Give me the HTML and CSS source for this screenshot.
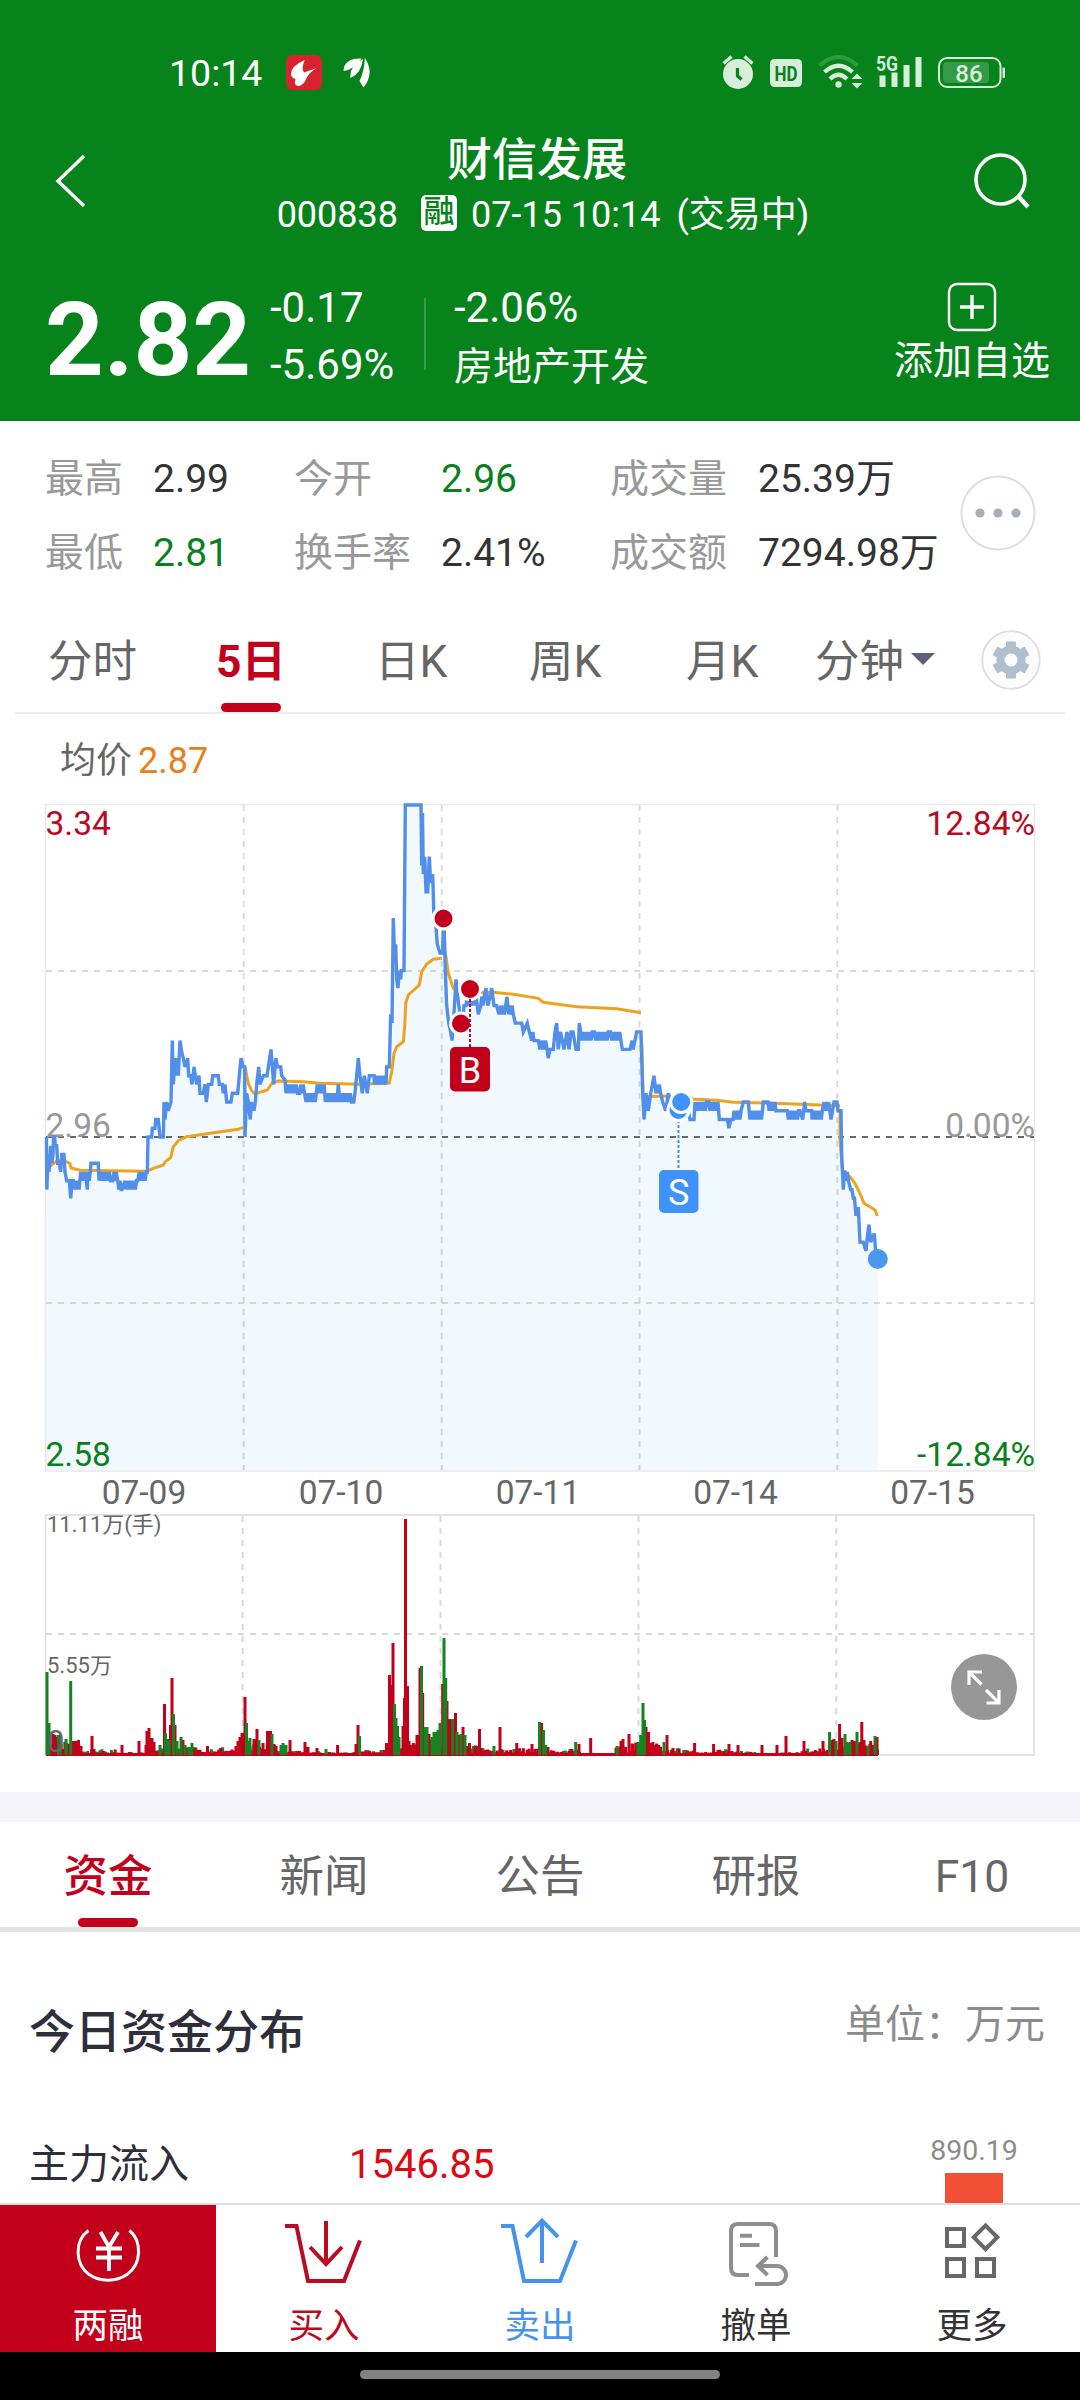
FILE: index.html
```html
<!DOCTYPE html>
<html lang="zh-CN">
<head>
  <meta charset="UTF-8" />
  <meta name="viewport" content="width=device-width, initial-scale=1.0"/>
  <title>财信发展 000838</title>
  <link rel="stylesheet" href="styles.css">
</head>
<body>

<header>
  <div class="status">
    <span class="time">10:14</span>
    <svg class="apps" width="90" height="50" viewBox="280 48 90 50">
      <rect x="286" y="55" width="36" height="35" rx="6" fill="#d8232f"/>
      <path d="M304.7 60 Q291 66 291 74 Q291 78 295.5 79 Q293 86 299 86 Q304 85 307 77 Q311 71 317 68 L304 72.5 Q301 69 304.7 60z" fill="#fff"/>
      <path d="M361.500 58.500 Q344 58 343.500 71 Q354 70 361.500 58.500z M363 59 Q349 66 350.500 78 Q361 74 363 59z M364.800 58 Q364.500 71 359.500 81 L363.500 87.500 Q375 73 364.800 58z" fill="#fff"/>
    </svg>
    <svg class="signals" width="310" height="50" viewBox="710 48 310 50">
      <g fill="#d8eedb">
        <circle cx="738" cy="74" r="15"/>
        <path d="M723.5 63.5 l8-7 M744.5 56.5 l8 7" stroke="#d8eedb" stroke-width="3.4"/>
        <path d="M737.5 68 v8 l4 3.5" fill="none" stroke="#07831b" stroke-width="3.2"/>
        <rect x="770" y="59" width="32" height="28" rx="4.5"/>
        <text class="hd" x="786" y="80.500" textLength="23" lengthAdjust="spacingAndGlyphs">HD</text>
        <path d="M819.5 65.5 Q838.5 48.5 857.5 65.5" fill="none" stroke="#d8eedb" stroke-opacity=".2" stroke-width="4"/>
        <path d="M824.5 72 Q838.5 59.5 852.5 72" fill="none" stroke="#d8eedb" stroke-width="4.2"/>
        <path d="M830 79 Q838.5 70.5 847 79" fill="none" stroke="#d8eedb" stroke-width="4.2"/>
        <circle cx="838.5" cy="84.5" r="3.2"/>
        <path d="M857 73.5 l5.5 5.5 h-11z M857 88.5 l5.5 -5.5 h-11z"/>
        <text class="net" x="876" y="70.5" textLength="22" lengthAdjust="spacingAndGlyphs">5G</text>
        <path d="M879.5 75.5h6v11.5h-6z M891.5 72.5h6v14.5h-6z M903.5 65h6v22h-6z M915.5 57h6v30h-6z"/>
        <rect x="939" y="58" width="61.5" height="29" rx="8" fill="none" stroke="#d8eedb" stroke-width="2"/>
        <rect x="943" y="62" width="46" height="21" rx="4" fill-opacity=".22"/>
        <rect x="1002.5" y="67.5" width="2.5" height="10.5" rx="1"/>
        <text class="bat" x="969" y="81.5">86</text>
      </g>
    </svg>
  </div>

  <div class="titlebar">
    <svg class="back" width="40" height="60" viewBox="0 0 40 60"><path d="M34 5 L8 30 L34 55" fill="none" stroke="#fff" stroke-width="3.4"/></svg>
    <div class="title">
      <h1>财信发展</h1>
      <p><span>000838</span><b>融</b><span>07-15 10:14</span><span class="state">(交易中)</span></p>
    </div>
    <svg class="search" width="60" height="60" viewBox="0 0 60 60"><circle cx="28.5" cy="28.5" r="24.5" fill="none" stroke="#fff" stroke-width="3.6"/><path d="M46 45 L56 56" stroke="#fff" stroke-width="4.5"/></svg>
  </div>

  <div class="quote">
    <div class="price">2.82</div>
    <div class="change"><span>-0.17</span><span>-5.69%</span></div>
    <div class="sector"><span>-2.06%</span><span class="name">房地产开发</span></div>
    <div class="add">
      <svg width="50" height="50" viewBox="0 0 50 50"><rect x="2" y="2" width="46" height="46" rx="8" fill="none" stroke="#fff" stroke-width="2.4"/><path d="M13 25H37M25 13V37" stroke="#fff" stroke-width="3.4"/></svg>
      <span>添加自选</span>
    </div>
  </div>
</header>

<section class="stats">
  <dl>
    <dt>最高</dt><dd>2.99</dd><dt>今开</dt><dd class="down">2.96</dd><dt>成交量</dt><dd>25.39万</dd>
    <dt>最低</dt><dd class="down">2.81</dd><dt>换手率</dt><dd>2.41%</dd><dt>成交额</dt><dd>7294.98万</dd>
  </dl>
  <svg class="dots" width="76" height="76" viewBox="0 0 76 76"><circle cx="38" cy="38" r="36.5" fill="#fff" stroke="#dedede" stroke-width="2"/><g fill="#a9afb9"><circle cx="20" cy="38" r="4.6"/><circle cx="38" cy="38" r="4.6"/><circle cx="56" cy="38" r="4.6"/></g></svg>
</section>

<nav class="periods">
  <span>分时</span>
  <span class="active">5日</span>
  <span>日K</span>
  <span>周K</span>
  <span>月K</span>
  <span class="minute">分钟<i></i></span>
  <svg class="gear" width="60" height="60" viewBox="-30 -30 60 60">
    <circle r="28.8" fill="#fcfcfc" stroke="#dedede" stroke-width="1.8"/>
    <g fill="#afbfd0">
      <circle r="14.5"/>
      <rect id="tooth" x="-5" y="-18.5" width="10" height="37" rx="1"/>
      <use href="#tooth" transform="rotate(60)"/>
      <use href="#tooth" transform="rotate(120)"/>
    </g>
    <circle r="6.5" fill="#fcfcfc"/>
  </svg>
</nav>

<section class="chart">
  <p class="avg">均价 <span>2.87</span></p>
  <svg id="chart" width="1080" height="992" viewBox="0 800 1080 992">
    <!-- price pane -->
    <path d="M45.5 804.5H1034.5V1471H45.5z" class="frame light"/>
    <path d="M243.7 805V1470M441.7 805V1470M639.5 805V1470M837.3 805V1470M46 971H1034M46 1303H1034" class="grid"/>
    <polygon id="area"/>
    <path d="M46 1137H1034" class="zero"/>
    <text x="45.5" y="835" class="up">3.34</text>
    <text x="1035" y="835" class="up end">12.84%</text>
    <text x="45.5" y="1136.5" class="flat">2.96</text>
    <text x="1035" y="1136.5" class="flat end">0.00%</text>
    <g id="avg"></g>
    <polyline id="price"/>
    <text x="45.5" y="1466" class="down">2.58</text>
    <text x="1035" y="1466" class="down end">-12.84%</text>

    <!-- trade marks -->
    <g fill="#c3001b" stroke="#fff" stroke-width="3">
      <circle cx="443.5" cy="918.5" r="10.5"/>
      <circle cx="461" cy="1023.5" r="10.5"/>
      <circle cx="470" cy="989" r="10.5"/>
    </g>
    <path d="M470 999V1047" class="lead buy"/>
    <rect x="450" y="1047" width="40" height="44.5" rx="5" fill="#c3001b"/>
    <text x="470" y="1083" class="mark">B</text>
    <path d="M678.5 1120V1170" class="lead sell"/>
    <g fill="#3f92fb" stroke="#fff" stroke-width="3">
      <circle cx="678.5" cy="1110" r="10.5"/>
      <circle cx="681.2" cy="1102" r="10.5"/>
    </g>
    <rect x="659" y="1170" width="39.5" height="43" rx="5" fill="#3f92fb"/>
    <text x="678.7" y="1205" class="mark">S</text>
    <circle cx="877.8" cy="1259" r="10" fill="#4a98ec"/>

    <g class="days">
      <text x="144" y="1504">07-09</text>
      <text x="341" y="1504">07-10</text>
      <text x="538" y="1504">07-11</text>
      <text x="735.5" y="1504">07-14</text>
      <text x="932.5" y="1504">07-15</text>
    </g>

    <!-- volume pane -->
    <path d="M45.5 1515H1034V1755H45.5z" class="frame"/>
    <path d="M242.7 1516V1754M440.5 1516V1754M638.5 1516V1754M836.2 1516V1754M46 1634H1034" class="grid"/>
    <path id="volGreen" class="vol"/>
    <path id="volRed" class="vol"/>
    <path id="volTop" class="vol"/>
    <path id="volTopGreen" class="vol"/>
    <g class="small">
      <text x="47" y="1532">11.11万(手)</text>
      <text x="47" y="1673">5.55万</text>
      <text x="47" y="1752" class="base">0</text>
    </g>
    <circle cx="984" cy="1687" r="33" fill="#979797"/>
    <path d="M981.5 1684.5L969 1672M982 1672H969V1685M986 1690L999 1703M986.5 1703H999V1690" fill="none" stroke="#fff" stroke-width="3.2"/>
  </svg>
</section>

<nav class="tabs">
  <span class="active">资金</span><span>新闻</span><span>公告</span><span>研报</span><span>F10</span>
</nav>

<section class="funds">
  <div class="funds-head"><h2>今日资金分布</h2><span>单位：万元</span></div>
  <div class="funds-row">
    <span class="label">主力流入</span>
    <span class="value">1546.85</span>
    <div class="bar"><span>890.19</span><i></i></div>
  </div>
</section>

<footer>
  <div class="active">
    <svg width="90" height="80" viewBox="64 2210 90 80"><g fill="none" stroke="#fff" stroke-width="3"><path d="M89.5 2230.5C75 2241 76 2264 90 2274.5C101 2282 117 2282 128 2274.5C143 2264 143 2241 130.5 2230.5"/><path d="M101.5 2232L110 2247L119 2232M97 2248.5H123M97 2257.5H123M110 2247V2271" stroke-width="3.8"/></g></svg>
    <span>两融</span>
  </div>
  <div class="red">
    <svg width="90" height="80" viewBox="280 2210 90 80"><path d="M286 2226H297.5L309 2281H345L361 2240.5M327 2221V2264M311 2247L327 2264L343 2247" fill="none" stroke="#b90c22" stroke-width="4"/></svg>
    <span>买入</span>
  </div>
  <div class="blue">
    <svg width="90" height="80" viewBox="496 2210 90 80"><path d="M502 2226H513.5L525 2281H561L577 2240.5M543 2263V2221M527 2237L543 2220.5L559 2237" fill="none" stroke="#4593ee" stroke-width="4"/></svg>
    <span>卖出</span>
  </div>
  <div>
    <svg width="90" height="80" viewBox="712 2210 90 80"><path d="M777 2257V2231Q777 2224 770 2224H739Q732 2224 732 2231V2268Q732 2275 739 2275H750M741 2235.7H753M741 2245H760.5M768.5 2257L759 2266L768.5 2275M759 2266H778A9 9 0 0 1 778 2284H756" fill="none" stroke="#8e8e8e" stroke-width="4"/></svg>
    <span>撤单</span>
  </div>
  <div>
    <svg width="90" height="80" viewBox="927 2210 90 80"><path d="M947 2229H964V2246H947zM947 2259H964V2276H947zM977 2259H994V2276H977zM985.5 2225.5L997.3 2237.3L985.5 2249.1L973.7 2237.3z" fill="none" stroke="#686868" stroke-width="4"/></svg>
    <span>更多</span>
  </div>
</footer>
<div class="homebar"><i></i></div>

<script src="chart.js"></script>
</body>
</html>
```

FILE: styles.css
```css
* {
  box-sizing: border-box;
}
body {
  font-family: Roboto, "Noto Sans CJK SC", sans-serif;
  background-color: #fff;
  color: #333;
  margin: 0;
  width: 1080px;
  height: 2400px;
  overflow: hidden;
  display: flex;
  flex-direction: column;
}
h1, h2, p, dl, dd {
  margin: 0;
}
svg {
  display: block;
  flex: none;
}

/* header */
header {
  background-color: #07831b;
  color: #fff;
  height: 421px;
  flex: none;
}
.status {
  height: 98px;
  padding: 48px 60px 0 169px;
  display: flex;
}
.time {
  font-size: 37.5px;
  line-height: 50px;
  width: 111px;
}
.signals {
  margin-left: auto;
}
.hd, .net, .bat {
  font-weight: 700;
  font-size: 21px;
}
.hd {
  fill: #07831b;
  text-anchor: middle;
}
.bat {
  font-weight: 500;
  font-size: 24px;
  text-anchor: middle;
}
.titlebar {
  height: 170px;
  display: flex;
  justify-content: space-between;
  padding: 0 48px 0 50px;
}
.back, .search {
  margin-top: 53px;
}
.title {
  padding: 36px 0 0 24px;
  text-align: center;
}
.title h1 {
  margin-right: 12px;
  font-size: 45px;
  font-weight: 500;
  line-height: 54px;
}
.title p {
  display: flex;
  align-items: center;
  padding-top: 2px;
  font-size: 36px;
  line-height: 50px;
  white-space: nowrap;
}
.title b {
  width: 36px;
  height: 36px;
  margin: 0 14px 4px 23px;
  border-radius: 5px;
  background-color: #fff;
  color: #07831b;
  font-size: 31px;
  font-weight: 500;
  line-height: 34px;
}
.title .state {
  margin-left: 16px;
}
.quote {
  display: flex;
  height: 153px;
  padding-left: 45px;
}
.price {
  width: 225px;
  font-size: 102.5px;
  font-weight: 700;
  line-height: 120px;
  padding-top: 12px;
}
.change, .sector {
  display: flex;
  flex-direction: column;
  font-size: 42px;
  line-height: 57px;
  padding-top: 11px;
}
.change {
  width: 154px;
}
.sector {
  position: relative;
  padding-left: 30px;
}
.sector::before {
  content: "";
  position: absolute;
  left: 0;
  top: 30px;
  width: 2px;
  height: 72px;
  background-color: #399c49;
}
.sector .name {
  padding-top: 3px;
  font-size: 39px;
}
.add {
  margin-left: auto;
  padding: 14px 30px 0 0;
  display: flex;
  flex-direction: column;
  align-items: center;
  font-size: 39px;
  line-height: 58px;
}

/* figures */
.stats {
  display: flex;
  flex: none;
  height: 179px;
  padding: 21px 45px 0 45px;
}
.stats dl {
  display: grid;
  grid-template-columns: 108px 141px 147px 169px 148px 202px;
  grid-auto-rows: 74px;
  font-size: 39px;
  line-height: 74px;
  white-space: nowrap;
}
.stats dt {
  color: #999;
}
.down {
  color: #0b7f20;
  fill: #0b7f20;
}
.dots {
  margin-top: 33px;
}

/* period tabs */
.periods {
  display: grid;
  grid-template-columns: 168px 159px 154px 157px 129px 166px 60px;
  justify-items: start;
  align-items: start;
  flex: none;
  height: 114px;
  margin: 0 15px;
  padding: 30px 0 0 33px;
  border-bottom: 2px solid #ececec;
  color: #666;
  font-size: 44.5px;
  line-height: 64px;
}
.periods .active, .tabs .active {
  color: #c3001b;
  font-weight: 700;
  position: relative;
}
.periods .active {
  height: 82px;
}
.periods .active::after, .tabs .active::after {
  content: "";
  position: absolute;
  left: 50%;
  bottom: 0;
  width: 60px;
  height: 9px;
  margin-left: -30px;
  border-radius: 5px;
  background-color: #c3001b;
}
.periods .minute {
  display: flex;
}
.minute i {
  width: 24px;
  height: 12px;
  margin: 23px 0 0 7px;
  background-color: #5f607a;
  clip-path: polygon(0 0, 100% 0, 50% 100%);
}

/* chart */
.chart {
  flex: none;
  height: 1078px;
}
.avg {
  height: 86px;
  padding: 21px 0 0 60px;
  display: flex;
  color: #666;
  font-size: 36px;
  line-height: 52px;
}
.avg span {
  margin-left: 6px;
  color: #e8801a;
}
#chart text {
  font-size: 33.5px;
}
#chart text.end {
  text-anchor: end;
}
.up {
  fill: #b80a22;
}
.flat {
  fill: #999;
}
.frame {
  fill: none;
  stroke: #dcdcdc;
  stroke-width: 1.6;
}
.frame.light {
  stroke: #e9e9e9;
  stroke-width: 1.5;
}
.grid {
  fill: none;
  stroke: #dadada;
  stroke-width: 2;
  stroke-dasharray: 6 6;
}
.zero {
  stroke: #646a70;
  stroke-width: 2;
  stroke-dasharray: 6 6;
}
#area {
  fill: #3ba3ff;
  fill-opacity: .07;
}
#price {
  fill: none;
  stroke: #528fea;
  stroke-width: 3.4;
}
#avg polyline {
  fill: none;
  stroke: #eda31f;
  stroke-width: 3;
}
.lead {
  fill: none;
  stroke-width: 2;
  stroke-dasharray: 3 2;
}
.buy {
  stroke: #b80a22;
}
.sell {
  stroke: #3f92fb;
}
#chart .mark {
  fill: #fff;
  font-size: 36px;
  text-anchor: middle;
}
.days text {
  fill: #666;
  text-anchor: middle;
}
.vol {
  fill: none;
  stroke: #c3001b;
  stroke-width: 3;
}
#volGreen, #volTopGreen {
  stroke: #158321;
}
#chart .small text {
  fill: #666;
  font-size: 22px;
}
#chart .small .base {
  font-size: 31px;
}

/* info tabs */
.tabs {
  display: flex;
  flex: none;
  height: 140px;
  border-top: 30px solid #f4f4fa;
  border-bottom: 5px solid #e2e2e2;
  color: #666;
  font-size: 44.5px;
  line-height: 110px;
  text-align: center;
}
.tabs span {
  flex: 1;
  height: 105px;
}
.tabs .active {
  font-weight: 500;
}

/* funds */
.funds {
  flex: none;
  height: 271px;
  padding: 0 35px 0 29px;
  color: #2e2f3b;
  overflow: hidden;
}
.funds-head {
  display: flex;
  justify-content: space-between;
  height: 195px;
  padding-top: 64px;
  line-height: 72px;
}
.funds-head h2 {
  font-size: 46px;
  font-weight: 500;
}
.funds-head span {
  color: #8b8b8b;
  font-size: 40px;
  line-height: 58px;
}
.funds-row {
  display: flex;
  font-size: 40px;
  line-height: 76px;
}
.label {
  width: 320px;
}
.value {
  color: #dc0914;
}
.bar {
  margin-left: auto;
  margin-right: 27px;
  width: 88px;
  display: flex;
  flex-direction: column;
  align-items: center;
  color: #8b8b8b;
  font-size: 28.5px;
  line-height: 46px;
}
.bar span {
  padding-top: 2px;
  line-height: 44px;
}
.bar i {
  width: 58px;
  height: 40px;
  background-color: #f15035;
}

/* trade bar */
footer {
  display: flex;
  flex: none;
  height: 149px;
  border-top: 2px solid #dcdcdc;
}
footer div {
  flex: 1;
  display: flex;
  flex-direction: column;
  align-items: center;
  padding-top: 5px;
  font-size: 35.5px;
  line-height: 73px;
}
footer span {
  height: 62px;
}
footer .active {
  background-color: #c3001b;
  color: #fff;
}
footer .red {
  color: #b90c22;
}
footer .blue {
  color: #4593ee;
}
.homebar {
  flex: 1;
  padding-top: 18px;
  background-color: #000;
}
.homebar i {
  display: block;
  width: 360px;
  height: 9px;
  margin: 0 auto;
  border-radius: 5px;
  background-color: #828282;
}
```

FILE: chart.js
```js
const ZERO_Y = 1137;
const TICK = 8.76; // one cent of price

// five-day price: [x, cents from 2.96], or [x, a, b, endX] while it trades between two prices
const price = [
  [46.5,0],[46.8,-6],[48.3,-2],[49,-4],[50.7,-1],[51.7,-3],[53,-2],[53.5,0],[54.7,0],[55.3,-1],[56.7,-1],[57.7,-3],[59.3,-3],[60.7,-4],[61.7,-2],[64,-2],[65,-4],[66.7,-5],[69.3,-5],[70.7,-7],[72,-5],
  [73.3,-5,-6,80],[80.7,-4,-5,86],[87.3,-6],[88,-4,-5,91],[91,-3],[98.3,-3],[99,-5,-4,117],[117.7,-5,-6,122],[122,-6],[125,-5,-6,138.5],[139.3,-4,-5,147],[147.3,-4],
  [148,0],[151.7,0],[152.3,1],[155,1],[155.7,2],[158.3,2],[160,0],[163.3,0],[164,4],[165,2],[166.7,4],[168.3,3],[171,4],[172.3,11],[173.3,6],[175,9],[176,7],[177,9],[178.3,7],[180,11],[181.7,9.7],[183.3,9],[185,8],[187.7,9],[188.7,7],[190.7,7],[192,6],[194,8],[196.7,6],[199,7],[200,5],[203.3,5],[205,6],[206.3,4],[208.3,6],[211.7,6],[212.7,7],[218.3,7],[219.3,6],[222.3,6],[223.3,5],[225,6],[226.7,4],[231,4],[232.3,5],[237.7,5],[239.3,7],[241,9],[243.3,8],[244.7,8],
  [245,0],[246.7,5],[248.3,4],[250.3,2],[251.3,4],[254,3],[255.3,4],[256.7,6],[258.7,8],[260,6],[263.3,7],[267,7],[268.3,8],[271,10],[273.7,6],[275,8],[276,9],[277.3,8],[280.7,8],[281.7,7],[285,6.5],
  [286,5,6,304],[306,4,5,317],[317.3,6,5,325],[325.3,4,5,337],[338.3,6],[340,4,5,355],[356.7,7],[358.3,9],[360,7],[362.3,5],[364.3,7],[367.3,5],[369.3,7],[374,7],[374.5,6,7,386],
  [386.7,8],[389.3,8],[390.7,14],[392,13],[393.3,25],[394.7,20],[395.7,22],[396.7,18],[398,17],[399.3,19],[400.7,18],[401.3,19],[404,19],[405.3,38],[421,38],[421.7,31],[422.5,37],[423.3,30],[424.7,32],[426,28],[427.7,28],[429.3,32],[430.7,29],[432.7,30],[434,25],[436,24],[437.3,22],[440,21],[442.7,21],
  [443.7,26],[445.3,19],[446.7,15],[448.7,13],[450.7,12],[452,11],[453.3,13],[455,16],[456,18],[457.7,16],[460,14],[462,12],[464,15],[466,15,16,477],[478.3,14],[480.7,15,16,485],[486,17],[487.7,15],[490,16],[491.7,17],[494,15],[496.7,15],[499,14],[501,15,14,505],[507,16],[508.7,14,15,514],[515.3,13],[521.7,13],[523.3,12],[527.3,13],[529.3,12],[531.7,11,12,534],[535,11],[538.3,11],[540,10,11,546],[548.3,9],[550,10],[553.3,10],[555,12],[556.7,13],[558.3,10],[560.5,12],[564,10],[567,12],[569,10],[571,12],[573,12],[576,10],[578.3,10],[579.3,13],[580.7,12,11,622],[622.3,10],[630,10],[632,11,10,634],[636.7,12],[641,12],
  [642.7,5],[644,2],[646,5],[648.3,3],[650.7,5],[654,7],[656,5,6,661],[662.7,4],[665.7,3],[668.3,5],[671,4],[676,4],[682,3],[688.3,3],[690,2],[694,2],[695,4,3,718],[719.3,2],[727.3,2],[729,1],[730.7,2],[733,2,3,742],[743.3,4],[748.3,4],[750,2,3,762],[763.3,4],[768,4,3,777],[778,3],[787.3,3],[788.3,2,3,799],[800,3],[802.7,2],[804.7,4],[806,3],[811.7,3],[812,2,3,823],[824,4,3,829],[831,2],[834,4],[837,4],[838,3],[841,3],
  [841.7,-2],[843.3,-6],[844.3,-4],[845,-4,-5,849],[850.7,-6],[852,-6],[853.3,-7],[854.5,-7],[856,-9],[858.3,-8],[860,-12],[863.3,-12],[866,-13],[867.7,-11],[869,-10],[870.7,-12],[874.3,-11],[875,-12],[876,-14]
];

const average = [
  "46.7,1170 53.3,1163.5 56.7,1161 65,1161 70,1163.5 71,1168 80,1170.3 146.7,1171.3 153.3,1168.3 163.3,1165 166,1161 170.7,1157.7 173.3,1146.7 178.3,1140.7 186.7,1136.7 210,1133.3 238.3,1129.3 243.3,1127.3",
  "245,1066.7 248.3,1083.3 251.7,1090.7 255,1094 261.7,1091.7 267.3,1090 272.3,1082.7 278.3,1081 303.3,1081.7 320,1083.3 360,1084.3 389.3,1083 392,1070 394,1053.3 396.7,1046.7 403.3,1041.7 404.7,1026.7 405.7,1003.3 408.3,995 419.3,985 421.7,971.7 426.7,964 433.3,959.3 441.7,958.3",
  "443.7,946.7 446,956.7 448.3,973.3 453.3,988.3 460,993.3 493.3,992.3 513.3,994.3 538.3,998.3 543.3,1002.3 576.7,1006.7 616.7,1008.7 641,1012.7",
  "641.7,1043.3 643.3,1100 648.3,1096.7 663.3,1096 695,1099.3 716.7,1100.3 733.3,1102.3 773.3,1103.3 840,1105.7",
  "840,1111.7 840,1140 842.7,1173.3 849.3,1176 855,1183.3 860.7,1195 864,1203.3 875,1210 877.3,1216"
];

const points = [];
price.forEach(([x, a, b, end]) => {
  if (end === undefined) {
    points.push([x, ZERO_Y - a * TICK]);
    return;
  }
  let i = 0;
  for (let px = x; px <= end; px += 1.15) {
    // skip a beat now and then so the run is not perfectly even
    const v = i % 7 === 4 ? a : (i % 2 ? b : a);
    points.push([px, ZERO_Y - v * TICK]);
    i++;
  }
});
const line = points.map(([x, y]) => x.toFixed(1) + "," + Math.max(y, 805).toFixed(1)).join(" ");
document.getElementById("price").setAttribute("points", line);
document.getElementById("area").setAttribute("points", "46,1470 " + line + " 878,1260 878,1470");
document.getElementById("avg").innerHTML = average.map(p => `<polyline points="${p}"/>`).join("");

// volume: x, height, r/g
const peaks = `47 83 g,49 32 g,48 30 r,53 21 r,55 20 r,56.5 18 r,58.5 20 g,60 19 g,66 16 g,70.7 74 g,71.5 14 r,74 14 r,76.5 14 r,78.5 15 r,81 9 r,92 19 r,94 6 r,
122 10 r,139 14 r,147 24 r,149 27 r,152 17 r,154 13 r,160 10 g,164.5 51 r,165.5 22 g,167.5 16 g,169 15 g,170.5 30 r,172 77 r,173.5 41 g,175 30 r,177 14 g,181 18 g,183 15 r,185 10 g,189 8 g,192 12 g,194 7 r,207.5 9 r,
236 9 r,238 14 r,240 18 r,242 22 r,245 58 r,246.5 32 g,248 14 g,250 17 g,254 16 r,257 26 r,259 15 g,263 12 r,267.5 24 r,270.5 24 r,272 21 g,274 11 r,276 9 r,281 10 g,283 12 g,286 10 g,290 15 r,305 13 r,308 8 r,317 7 r,326 6 g,337.6 10 r,
356 11 r,358 30 r,359.5 19 g,386.5 12 r,389.5 80 r,391.5 70 r,393 112 r,394.5 51 g,396 37 g,397.5 29 g,399 18 g,403 29 r,404.5 57 r,405.5 236 r,407.5 69 r,409 14 r,411 10 r,413 9 r,417 20 r,420 87 r,421.5 89 g,422.7 62 r,425 28 g,427 28 g,429 21 r,432 18 g,434 23 g,436 23 g,438 25 g,440 32 g,
442.7 71 r,444 117 g,445.7 77 g,447 54 r,449.5 36 r,451 35 r,452.7 36 g,455.5 42 r,457 23 g,459 20 r,461 21 g,463 28 r,465 20 g,467 9 r,469.5 12 r,475 8 r,479.5 26 r,494 9 g,500 28 r,516.7 12 r,532 11 r,
539.5 33 g,541.5 32 r,543.5 25 g,545.7 10 g,548 8 r,575.7 13 g,579 11 r,590.7 17 r,617 9 g,621 14 r,623 16 r,629 21 r,633 11 r,638 13 g,640.7 20 g,643 52 g,644.5 35 g,646 28 r,648.5 23 r,651 12 r,655 10 r,664 13 g,667 20 r,673 7 r,
694.6 12 r,713.6 11 r,729 11 r,738 10 r,762 10 r,777 10 r,786 19 r,804 14 r,823 14 r,829.6 23 g,832 15 r,834 16 r,836 14 g,839.6 31 r,842 17 r,845 21 g,847 12 g,850 13 g,852 15 r,854 14 r,857 23 g,859 12 r,861.8 33 r,864 15 r,868 9 g,870.7 14 r,873 10 r,875 19 g,877 18 r`
  .split(",").map(s => s.trim().split(" ")).map(([x, h, c]) => [+x, +h, c]);

// quiet trading between the peaks: from, to, highest bar
const quiet = [[48,63,15],[63,82,12],[82,100,5],[100,116,5],[116,146,2],[146,158,9],[158,200,8],[200,215,5],[215,236,7],[236,250,14],[250,278,11],[278,292,6],[292,320,3],[320,354,2],[354,364,4],[364,384,4],[384,402,11],[402,424,11],[424,436,17],[436,466,21],[466,484,9],[484,512,5],[512,536,6],[536,552,7],[552,570,4],[570,580,6],[580,616,1],[616,632,8],[632,662,12],[662,680,6],[680,698,5],[698,718,2],[718,732,5],[732,755,3],[755,780,1],[780,802,2],[802,818,6],[818,830,6],[830,878,13]];

// small fixed-seed generator, keeps the bars identical on every load
let seed = 838;
const rnd = () => (seed = (seed * 16807) % 2147483647) / 2147483647;

const bar = (x, h) => `M${x.toFixed(1)} 1755v${-h.toFixed(1)}`;
let red = "", green = "", topRed = "", topGreen = "";
quiet.forEach(([from, to, max]) => {
  for (let x = from; x < to; x += 1.9) {
    const h = 1 + max * (0.35 + 0.65 * rnd()) * (rnd() < 0.3 ? 0.5 : 1);
    if (rnd() < 0.6) red += bar(x, h);
    else green += bar(x, h);
  }
});
peaks.forEach(([x, h, c]) => {
  if (c === "g") topGreen += bar(x, h);
  else topRed += bar(x, h);
});
document.getElementById("volRed").setAttribute("d", red + "M46 1754.5H878");
document.getElementById("volGreen").setAttribute("d", green);
document.getElementById("volTop").setAttribute("d", topRed);
document.getElementById("volTopGreen").setAttribute("d", topGreen);
```
